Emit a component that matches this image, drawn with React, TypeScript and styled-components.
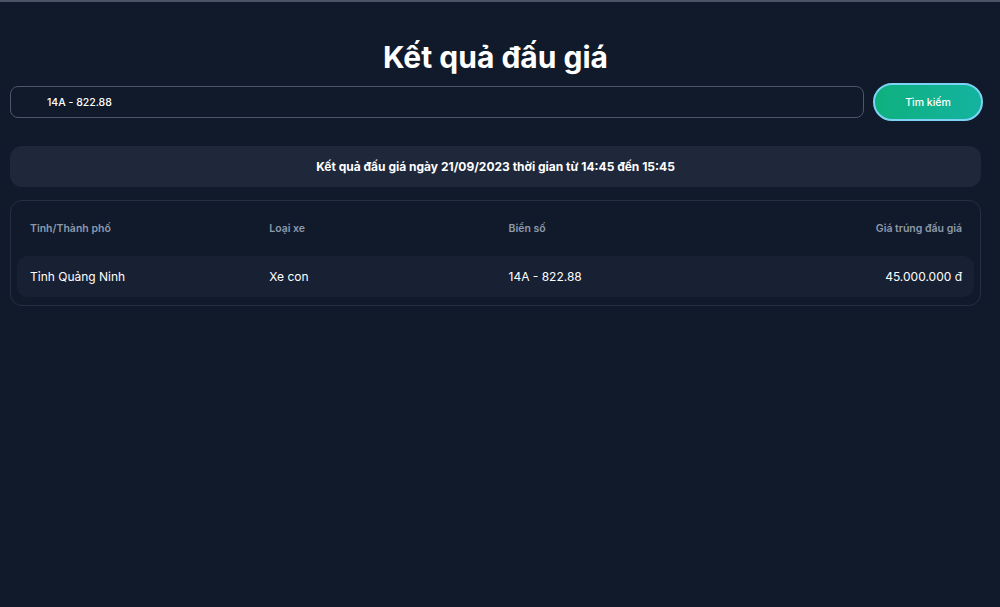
import React from "react";
import styled, { createGlobalStyle } from "styled-components";

const Global = createGlobalStyle`
  html, body { margin: 0; padding: 0; background: #111a2a; }
  body { font-family: Inter, "Noto Sans", sans-serif; color: #fff; }
  * { box-sizing: border-box; }
`;

const Page = styled.div`
  min-height: 607px;
  border-top: 2px solid #4a5466;
  background: #111a2a;
  padding: 0 19px 0 10px;
  display: flex;
  flex-direction: column;
`;

const Title = styled.h1`
  margin: 35px 0 0;
  text-align: center;
  font-size: 30px;
  line-height: 40px;
  font-weight: 700;
  color: #fff;
`;

const SearchBar = styled.div`
  display: flex;
  align-items: center;
  gap: 9px;
  margin-top: 6px;
`;

const Input = styled.input`
  flex: 1;
  height: 32px;
  border: 1px solid #4b5668;
  border-radius: 8px;
  background: #111a2a;
  color: #fff;
  font-family: Inter, sans-serif;
  font-size: 10.5px;
  font-weight: 500;
  padding: 0 0 0 36px;
  outline: none;
`;

const Button = styled.button`
  width: 110px;
  height: 38px;
  border-radius: 19px;
  border: 2px solid #7dd3f5;
  background: linear-gradient(90deg, #0fb07e, #14b3a0);
  color: #fff;
  font-family: Inter, sans-serif;
  font-size: 10.5px;
  font-weight: 500;
  margin-right: -2px;
`;

const Summary = styled.div`
  margin-top: 25px;
  height: 41px;
  border-radius: 12px;
  background: #1e283a;
  display: flex;
  align-items: center;
  justify-content: center;
  font-size: 12px;
  font-weight: 700;
  color: #fff;
`;

const TableCard = styled.div`
  margin-top: 13px;
  border: 1px solid #242f42;
  border-radius: 12px;
  padding: 6px 6px 8px;
`;

const Grid = styled.div<{ $head?: boolean }>`
  display: grid;
  grid-template-columns: repeat(4, 1fr);
  align-items: center;
  height: ${(p) => (p.$head ? "42px" : "41px")};
  margin-bottom: ${(p) => (p.$head ? "7px" : "0")};
  border-radius: 10px;
  background: ${(p) => (p.$head ? "transparent" : "#172133")};
  color: ${(p) => (p.$head ? "#8d99ab" : "#fff")};
  font-size: ${(p) => (p.$head ? "10.5px" : "12px")};
  font-weight: ${(p) => (p.$head ? 600 : 400)};
`;

const Cell = styled.div<{ $right?: boolean }>`
  padding: 0 12px 0 13px;
  text-align: ${(p) => (p.$right ? "right" : "left")};
`;

export default function App() {
  return (
    <>
      <Global />
      <Page>
        <Title>Kết quả đấu giá</Title>
        <SearchBar>
          <Input defaultValue="14A - 822.88" />
          <Button>Tìm kiếm</Button>
        </SearchBar>
        <Summary>Kết quả đấu giá ngày 21/09/2023 thời gian từ 14:45 đến 15:45</Summary>
        <TableCard>
          <Grid $head>
            <Cell>Tỉnh/Thành phố</Cell>
            <Cell>Loại xe</Cell>
            <Cell>Biển số</Cell>
            <Cell $right>Giá trúng đấu giá</Cell>
          </Grid>
          <Grid>
            <Cell>Tỉnh Quảng Ninh</Cell>
            <Cell>Xe con</Cell>
            <Cell>14A - 822.88</Cell>
            <Cell $right>45.000.000 đ</Cell>
          </Grid>
        </TableCard>
      </Page>
    </>
  );
}
